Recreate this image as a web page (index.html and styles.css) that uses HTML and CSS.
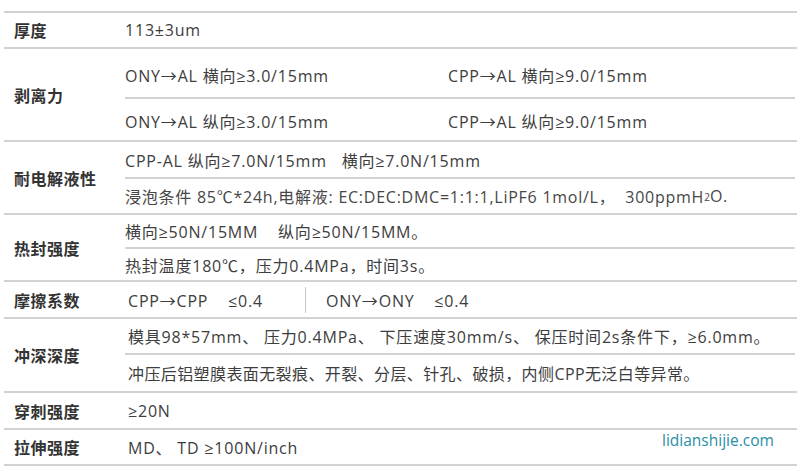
FILE: index.html
```html
<!DOCTYPE html>
<html lang="zh-CN">
<head>
<meta charset="utf-8">
<title>铝塑膜性能参数</title>
<link rel="stylesheet" href="styles.css">
</head>
<body>
<div class="page">
  <div class="table">
    <div class="row">
      <div class="label">厚度</div>
      <div class="vals">
        <div class="sub h34">113±3um</div>
      </div>
    </div>
    <div class="row">
      <div class="label">剥离力</div>
      <div class="vals">
        <div class="sub h48 pt"><span class="c1">ONY→AL 横向≥3.0/15mm</span><span>CPP→AL 横向≥9.0/15mm</span></div>
        <div class="sub h43 pt"><span class="c1">ONY→AL 纵向≥3.0/15mm</span><span>CPP→AL 纵向≥9.0/15mm</span></div>
      </div>
    </div>
    <div class="row">
      <div class="label">耐电解液性</div>
      <div class="vals">
        <div class="sub h35">CPP-AL 纵向≥7.0N/15mm&nbsp;&nbsp;&nbsp;横向≥7.0N/15mm</div>
        <div class="sub h34 light">浸泡条件 85℃*24h,电解液: EC:DEC:DMC=1:1:1,LiPF6 1mol/L，&nbsp;&nbsp;300ppmH<span class="small">2</span>O.</div>
      </div>
    </div>
    <div class="row">
      <div class="label">热封强度</div>
      <div class="vals">
        <div class="sub h32">横向≥50N/15MM&nbsp;&nbsp;&nbsp;&nbsp;纵向≥50N/15MM。</div>
        <div class="sub h31">热封温度180℃，压力0.4MPa，时间3s。</div>
      </div>
    </div>
    <div class="row">
      <div class="label">摩擦系数</div>
      <div class="vals">
        <div class="sub h35 ind"><span class="fc">CPP→CPP&nbsp;&nbsp;&nbsp;&nbsp;≤0.4</span><span class="vbar"></span><span>ONY→ONY&nbsp;&nbsp;&nbsp;&nbsp;≤0.4</span></div>
      </div>
    </div>
    <div class="row">
      <div class="label">冲深深度</div>
      <div class="vals">
        <div class="sub h34 ind">模具98*57mm、 压力0.4MPa、 下压速度30mm/s、 保压时间2s条件下，≥6.0mm。</div>
        <div class="sub h36 ind tight">冲压后铝塑膜表面无裂痕、开裂、分层、针孔、破损，内侧CPP无泛白等异常。</div>
      </div>
    </div>
    <div class="row">
      <div class="label">穿刺强度</div>
      <div class="vals">
        <div class="sub h35 ind">≥20N</div>
      </div>
    </div>
    <div class="row">
      <div class="label">拉伸强度</div>
      <div class="vals">
        <div class="sub h34 ind">MD、 TD ≥100N/inch</div>
      </div>
    </div>
  </div>
  <div class="mark">lidianshijie.com</div>
</div>
</body>
</html>
```
FILE: styles.css
```css
html, body {
  margin: 0;
  padding: 0;
  background: #ffffff;
}

body {
  font-family: "Open Sans", "Noto Sans CJK SC", sans-serif;
  color: #3d3d3d;
}

.page {
  position: relative;
  width: 800px;
  height: 474px;
  padding-top: 11px;
  box-sizing: border-box;
}

.table {
  margin-left: 4px;
  width: 793px;
  border-top: 2px solid #d2d2d2;
}

.row {
  display: flex;
  border-bottom: 2px solid #d2d2d2;
}

.label {
  width: 121px;
  flex: none;
  display: flex;
  align-items: center;
  padding-left: 10px;
  box-sizing: border-box;
  font-family: "Noto Sans CJK SC", sans-serif;
  font-weight: 700;
  font-size: 16px;
  letter-spacing: 0.5px;
  color: #333333;
}

.vals {
  flex: 1;
  display: flex;
  flex-direction: column;
  margin-right: 2px;
}

.sub {
  display: flex;
  align-items: center;
  font-size: 16px;
  letter-spacing: 0.8px;
  white-space: nowrap;
}

.sub + .sub {
  border-top: 2px solid #d2d2d2;
}

.ind {
  padding-left: 3px;
}

.pt {
  padding-top: 3px;
  box-sizing: border-box;
}

.c1 {
  width: 323px;
  flex: none;
}

.light {
  letter-spacing: 0.75px;
  color: #474747;
}

.tight {
  letter-spacing: 0.4px;
}

.small {
  font-size: 10px;
  position: relative;
  top: 1px;
  letter-spacing: 0;
}

.fc {
  width: 177px;
  flex: none;
}

.vbar {
  width: 1px;
  height: 26px;
  background: #c8c8c8;
  margin-right: 20px;
  flex: none;
}

.h31 { height: 31px; }
.h32 { height: 32px; }
.h34 { height: 34px; }
.h35 { height: 35px; }
.h36 { height: 36px; }
.h43 { height: 43px; }
.h48 { height: 48px; }

.mark {
  position: absolute;
  left: 662px;
  top: 429px;
  font-family: "Open Sans", sans-serif;
  font-size: 15.5px;
  font-weight: 500;
  color: #2a8ea7;
}
```
